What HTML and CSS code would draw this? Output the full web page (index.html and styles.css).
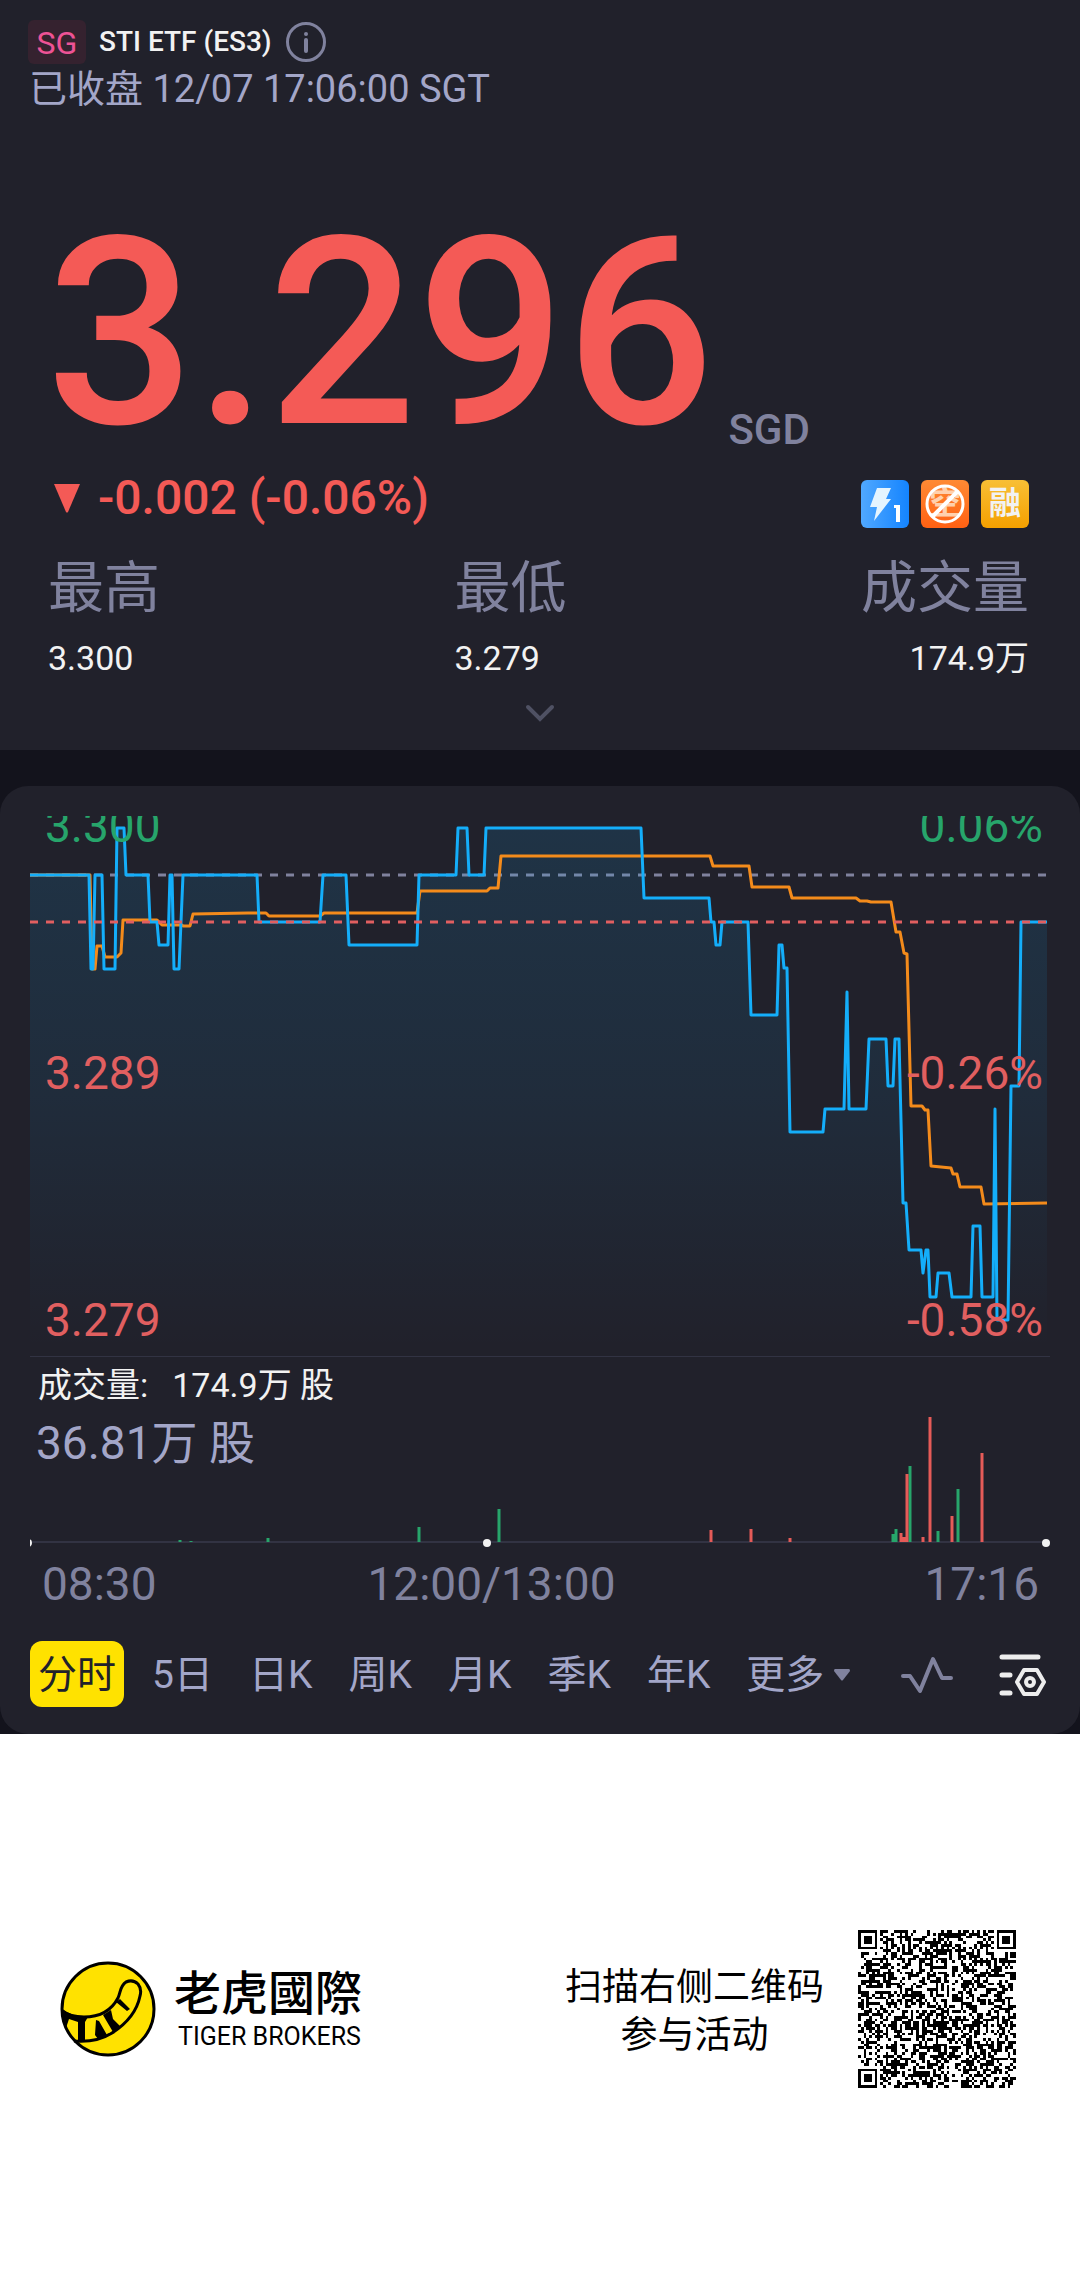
FILE: index.html
```html
<!DOCTYPE html>
<html lang="zh-CN">
<head>
<meta charset="utf-8">
<meta name="viewport" content="width=device-width, initial-scale=1">
<title>STI ETF (ES3)</title>
<link rel="stylesheet" href="styles.css">
</head>
<body>
<main class="app">
  <section class="quote">
    <header class="title">
      <span class="market">SG</span>
      <h1 class="name">STI ETF (ES3)</h1>
      <button class="icon-button" type="button" aria-label="info">
        <svg width="42" height="42" viewBox="0 0 42 42" fill="none" stroke="#80829e" stroke-width="3"><circle cx="21" cy="21" r="18.5"/><path d="M21 19v11" stroke-width="4" stroke-linecap="round"/><circle cx="21" cy="13" r="2" fill="#80829e" stroke="none"/></svg>
      </button>
    </header>
    <p class="status">已收盘 12/07 17:06:00 SGT</p>
    <div class="price-row">
      <strong class="price">3.296</strong>
      <span class="currency">SGD</span>
    </div>
    <div class="change-row">
      <svg class="down" width="26" height="29" viewBox="0 0 26 29"><path d="M0 0h26L14 28q-1 1-2 0z" fill="#f45a56"/></svg>
      <span class="change">-0.002 (-0.06%)</span>
      <ul class="tags">
        <li class="tag tag-blue"><svg width="48" height="48" viewBox="0 0 48 48"><path d="M16 8h14l-5 11h5L13 41l3-14H9z" fill="#e4f4ff"/><path d="M33 25h6v17h-4V28h-2z" fill="#fff"/></svg></li>
        <li class="tag tag-orange"><span class="tag-faint">空</span><svg class="tag-ban" width="48" height="48" viewBox="0 0 48 48" fill="none" stroke="#fff" stroke-width="3"><circle cx="24" cy="24" r="18"/><path d="M11 37L37 11" stroke-width="4"/></svg></li>
        <li class="tag tag-gold">融</li>
      </ul>
    </div>
    <dl class="stats">
      <div class="stat"><dt>最高</dt><dd>3.300</dd></div>
      <div class="stat"><dt>最低</dt><dd>3.279</dd></div>
      <div class="stat stat-end"><dt>成交量</dt><dd>174.9万</dd></div>
    </dl>
    <button class="expand" type="button" aria-label="展开">
      <svg width="30" height="18" viewBox="0 0 30 18" fill="none" stroke="#4f5163" stroke-width="4" stroke-linecap="round"><path d="M3 3l12 12L27 3"/></svg>
    </button>
  </section>

  <section class="card">
    <div class="chart">
      <svg class="plot" viewBox="30 816 1020 540" preserveAspectRatio="none" fill="none" stroke-width="3" stroke-linejoin="round">
        <defs>
          <linearGradient id="fade" x1="0" y1="816" x2="0" y2="1350" gradientUnits="userSpaceOnUse">
            <stop offset="0" stop-color="#12b0ff" stop-opacity=".13"/>
            <stop offset=".5" stop-color="#12b0ff" stop-opacity=".08"/>
            <stop offset="1" stop-color="#12b0ff" stop-opacity="0"/>
          </linearGradient>
        </defs>
        <path d="M30 875H1047" stroke="#80829e" stroke-dasharray="8 8"/>
        <path fill="url(#fade)" d="M30 1350V875H89L91 969H93L95 875H102L104 969H115L117 828H124L126 875H148L150 922H157L159 945H168L170 875H172L174 969H179L183 875H257L259 922H320L323 875H346L349 945H417L419 875H456L458 828H467L469 875H484L486 828H641L644 898H709L711 922H714L716 945H720L722 922H748L751 1015H777L779 945H782L784 968H787L790 1132H823L825 1109H844L847 992L849 1109H866L869 1039H886L888 1086H893L895 1039H899L903 1203H906L909 1250H921L923 1273L926 1250H928L930 1297H936L938 1273H949L952 1297H971L973 1226H980L982 1297H993L995 1109L997 1320H1008L1011 1086H1019L1021 922H1047V1350Z"/>
        <path stroke="#f48b1b" d="M30 875H90L92 969H95L97 946H102L105 957H117L121 953L123 920H157L162 925H182L183 926H190L193 914L248 913H266L269 916H320L324 913H417L420 891H487L490 888H498L501 856H710L713 866H749L752 887H789L792 898H856L860 901H867L871 902H891L896 932H900L904 953L907 954L911 1106H922L925 1110H928L931 1166L951 1168L953 1174H957L960 1187H981L984 1204L1047 1203"/>
        <path stroke="#14aefa" d="M30 875H89L91 969H93L95 875H102L104 969H115L117 828H124L126 875H148L150 922H157L159 945H168L170 875H172L174 969H179L183 875H257L259 922H320L323 875H346L349 945H417L419 875H456L458 828H467L469 875H484L486 828H641L644 898H709L711 922H714L716 945H720L722 922H748L751 1015H777L779 945H782L784 968H787L790 1132H823L825 1109H844L847 992L849 1109H866L869 1039H886L888 1086H893L895 1039H899L903 1203H906L909 1250H921L923 1273L926 1250H928L930 1297H936L938 1273H949L952 1297H971L973 1226H980L982 1297H993L995 1109L997 1320H1008L1011 1086H1019L1021 922H1047"/>
        <path d="M30 922H1047" stroke="#e15f60" stroke-dasharray="8 8"/>
      </svg>
      <div class="scale">
        <div class="scale-row up"><span>3.300</span><span>0.06%</span></div>
        <div class="scale-row"><span>3.289</span><span>-0.26%</span></div>
        <div class="scale-row"><span>3.279</span><span>-0.58%</span></div>
      </div>
    </div>
    <div class="volume">
      <svg class="bars" viewBox="30 1356 1020 192" preserveAspectRatio="none" fill="none" stroke-width="3">
        <path d="M30 1541H1050" stroke="#323343" stroke-width="2"/>
        <path stroke="#27a56b" d="M180 1541v-2M191 1541v-1M268 1541v-4M419 1541v-15M499 1541v-33M893 1541v-8M896 1541v-13M910 1541v-76M938 1541v-11M958 1541v-53"/>
        <path stroke="#e55b58" d="M711 1541v-12M751 1541v-13M790 1541v-4M901 1541v-9M904 1541v-5M907 1541v-68M923 1541v-5M930 1541v-125M952 1541v-26M982 1541v-89"/>
        <g fill="#f2f2f2"><circle cx="28" cy="1542" r="4"/><circle cx="487" cy="1542" r="4"/><circle cx="1046" cy="1542" r="4"/></g>
      </svg>
      <p class="volume-now"><span>成交量:</span><span>174.9万 股</span></p>
      <p class="volume-max">36.81万 股</p>
    </div>
    <div class="times"><span>08:30</span><span class="noon">12:00/13:00</span><span>17:16</span></div>
    <nav class="tabs">
      <button class="tab active" type="button">分时</button>
      <button class="tab" type="button">5日</button>
      <button class="tab" type="button">日K</button>
      <button class="tab" type="button">周K</button>
      <button class="tab" type="button">月K</button>
      <button class="tab" type="button">季K</button>
      <button class="tab" type="button">年K</button>
      <button class="tab more" type="button">更多<svg width="16" height="12" viewBox="0 0 16 12"><path d="M1 0h14q1 0 1 2L9 11q-1 1-2 0L0 2q0-2 1-2z" fill="#80829e"/></svg></button>
      <button class="icon-button wave" type="button" aria-label="指标">
        <svg width="52" height="38" viewBox="0 0 52 38" fill="none" stroke="#80829e" stroke-width="4" stroke-linecap="round" stroke-linejoin="round"><path d="M2 20h7l10 15L32 3l9 19h9"/></svg>
      </button>
      <button class="icon-button" type="button" aria-label="设置">
        <svg width="48" height="44" viewBox="0 0 48 44" fill="none" stroke="#ededed" stroke-width="5" stroke-linecap="round" stroke-linejoin="round"><path d="M3 4h36M3 22h8M3 40h8"/><path d="M25 17h13l7 12-7 12H25l-7-12z" stroke-width="4"/><circle cx="31" cy="29" r="4" stroke-width="4"/></svg>
      </button>
    </nav>
  </section>

  <footer class="promo">
    <a class="brand" href="#">
      <svg width="96" height="96" viewBox="0 0 96 96">
        <circle cx="48" cy="48" r="46" fill="#ffe200" stroke="#000" stroke-width="3"/>
        <path d="M2 50Q10 56 24 56Q48 56 58 37C61 30 60 25 66 21Q73 18 78 23Q82 28 80 35C77 50 66 63 52 72Q36 82 14 80" fill="none" stroke="#000" stroke-width="3"/>
        <path d="M1 47Q14 57 28 56L25 61 25 80H18L18 61 9 58 6 67Q1 58 1 47ZM36 59L39 60 47 74 38 78 35 74ZM43 54L51 49 53 58 60 65 53 71ZM56 41L60 38 70 48 67 50Z"/>
      </svg>
      <span class="brand-text"><span class="brand-cn">老虎國際</span><span class="brand-en">TIGER BROKERS</span></span>
    </a>
    <div class="invite">
      <p class="invite-text">扫描右侧二维码<br>参与活动</p>
      <svg class="qr" id="qr" viewBox="0 0 57 57" shape-rendering="crispEdges" role="img" aria-label="二维码"></svg>
    </div>
  </footer>
</main>
<script src="qr.js"></script>
</body>
</html>
```
FILE: styles.css
```css
* { box-sizing: border-box; margin: 0; padding: 0; }

body {
  background: #fff;
  font-family: Roboto, "Noto Sans CJK SC", sans-serif;
  color: #f2f2f2;
}

button {
  border: 0;
  background: none;
  font: inherit;
  color: inherit;
}

svg { display: block; }

.app { background: #13131c; }

/* Quote header */
.quote {
  display: flex;
  flex-direction: column;
  padding: 20px 28px 28px;
  background: #21212b;
}

.title { display: flex; align-items: center; }

.market {
  width: 58px;
  padding-top: 2px;
  border-radius: 6px;
  background: #35222f;
  color: #ee5396;
  font-size: 32px;
  line-height: 42px;
  text-align: center;
}

.name {
  margin: 0 13px;
  font-size: 28px;
  font-weight: 500;
  line-height: 40px;
}

.status {
  padding-left: 1px;
  color: #a3a6c8;
  font-size: 38px;
  line-height: 50px;
}

.price-row {
  display: flex;
  align-items: flex-end;
  gap: 14px;
  margin-top: 100px;
  padding-left: 18px;
}

.price {
  color: #f45a56;
  font-size: 262px;
  font-weight: 500;
  line-height: 240px;
}

.currency {
  color: #80829e;
  font-size: 42px;
  font-weight: 500;
  line-height: 48px;
}

.change-row {
  display: flex;
  align-items: center;
  gap: 18px;
  margin: 14px 23px 0 26px;
}

.change {
  color: #f45a56;
  font-size: 48px;
  font-weight: 500;
  line-height: 60px;
}

.tags {
  display: flex;
  gap: 12px;
  align-self: flex-end;
  margin-left: auto;
  list-style: none;
}

.tag {
  position: relative;
  width: 48px;
  height: 48px;
  border-radius: 6px;
  font-size: 32px;
  font-weight: 700;
  line-height: 46px;
  text-align: center;
}

.tag-blue { background: linear-gradient(90deg, #50a8ff, #1484ff); }
.tag-orange { background: linear-gradient(#ff8a34, #ff6113); }
.tag-gold { background: linear-gradient(#f8bf35, #f5a000); }
.tag-faint { color: #ffd0ad; }
.tag-ban { position: absolute; inset: 0; }

.stats {
  display: flex;
  justify-content: space-between;
  margin: 28px 23px 0 20px;
}

.stat dt {
  color: #80829e;
  font-size: 56px;
  line-height: 64px;
}

.stat dd {
  margin-top: 14px;
  font-size: 34px;
  line-height: 48px;
}

.stat-end { text-align: right; }

.expand {
  align-self: center;
  margin-top: 22px;
}

/* Chart card */
.card {
  margin-top: 36px;
  padding: 30px 30px 27px;
  border-radius: 28px;
  background: #21212b;
}

.chart {
  position: relative;
  height: 541px;
  overflow: hidden;
  border-bottom: 1px solid #323343;
}

.plot { width: 100%; height: 540px; }

.scale {
  position: absolute;
  inset: -14px 7px 12px 15px;
  display: flex;
  flex-direction: column;
  justify-content: space-between;
}

.scale-row {
  display: flex;
  justify-content: space-between;
  color: #e15f60;
  font-size: 46px;
  line-height: 48px;
}

.up { color: #27a56b; }

.volume {
  position: relative;
  height: 191px;
  padding: 8px 6px 0;
}

.bars {
  position: absolute;
  left: 0;
  top: 0;
  width: 100%;
  height: 192px;
}

.volume-now {
  display: flex;
  gap: 24px;
  padding-left: 2px;
  font-size: 34px;
  line-height: 40px;
}

.volume-max {
  margin-top: 10px;
  color: #a3a6c8;
  font-size: 46px;
  line-height: 56px;
}

.times {
  display: grid;
  grid-template-columns: 1fr auto 1fr;
  padding: 8px 11px 0 12px;
  color: #80829e;
  font-size: 46px;
  line-height: 56px;
}

.times :last-child { text-align: right; }
.noon { padding-right: 98px; }

.tabs {
  display: flex;
  align-items: center;
  gap: 20px;
  margin-top: 29px;
  padding-right: 3px;
}

.tab {
  padding: 2px 8px 0;
  border-radius: 12px;
  color: #a3a6c8;
  font-size: 39px;
  line-height: 64px;
  white-space: nowrap;
}

.active { background: #ffe200; color: #21212b; }

.more { display: flex; align-items: center; gap: 10px; }

.tabs .icon-button { padding-top: 2px; }

.wave { margin: 0 26px 0 auto; }

/* Promo footer */
.promo {
  display: flex;
  justify-content: space-between;
  align-items: center;
  padding: 196px 64px 198px 60px;
  background: #fff;
  color: #000;
}

.brand {
  display: flex;
  align-items: center;
  gap: 18px;
  color: inherit;
  text-decoration: none;
}

.brand-text { display: flex; flex-direction: column; }

.brand-cn {
  font-family: "Noto Sans CJK TC", sans-serif;
  font-size: 47px;
  font-weight: 500;
  line-height: 48px;
}

.brand-en {
  padding: 7px 0 0 4px;
  font-size: 25px;
  line-height: 32px;
}

.invite { display: flex; align-items: center; gap: 34px; }

.invite-text {
  padding-top: 6px;
  font-size: 37px;
  line-height: 48px;
  text-align: center;
}

.qr { width: 158px; height: 158px; }
```
FILE: qr.js
```javascript
// Fills the code with a fixed module pattern and its three finder marks.
const size = 57;
const finders = [[0, 0], [size - 7, 0], [0, size - 7]];
let seed = 20231207;

function nextBit() {
  seed = (Math.imul(seed, 1664525) + 1013904223) >>> 0;
  return seed >>> 31;
}

function isDark(x, y) {
  for (const [fx, fy] of finders) {
    const dx = x - fx, dy = y - fy;
    if (dx >= -1 && dx <= 7 && dy >= -1 && dy <= 7) {
      const ring = Math.max(Math.abs(dx - 3), Math.abs(dy - 3));
      return ring !== 2 && ring !== 4;
    }
  }
  if (x === 6 || y === 6) return (x + y) % 2 === 0;
  return nextBit() === 1;
}

let d = "";
for (let y = 0; y < size; y++) {
  for (let x = 0; x < size; x++) {
    if (isDark(x, y)) d += `M${x} ${y}h1v1h-1z`;
  }
}
const path = document.createElementNS("http://www.w3.org/2000/svg", "path");
path.setAttribute("d", d);
document.getElementById("qr").append(path);
```
